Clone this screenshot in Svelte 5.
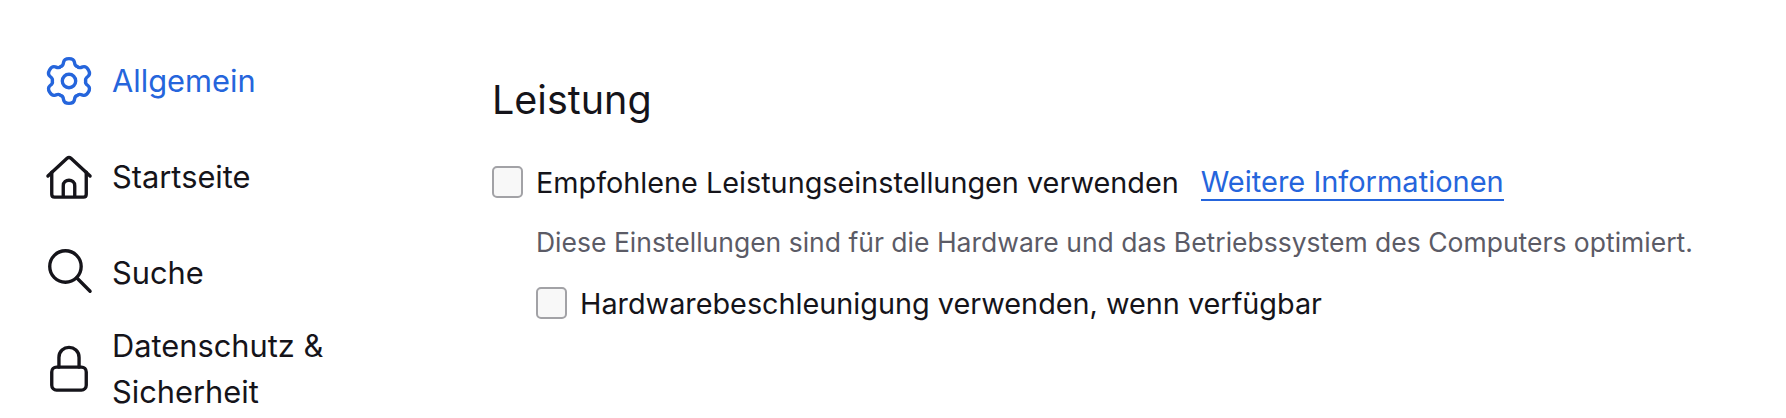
<script>
  const navItems = [
    { id: 'general', label: 'Allgemein', active: true },
    { id: 'home', label: 'Startseite' },
    { id: 'search', label: 'Suche' },
    { id: 'privacy', label: 'Datenschutz & Sicherheit' }
  ];

  function polar(deg, r) {
    const a = (deg * Math.PI) / 180;
    return `${(24 + r * Math.cos(a)).toFixed(2)} ${(24 + r * Math.sin(a)).toFixed(2)}`;
  }

  // six rounded teeth, one pointing straight up
  function gearPath() {
    let d = `M${polar(-120, 17.5)}`;
    for (let i = 0; i < 6; i++) {
      const a = -90 + i * 60;
      d += `Q${polar(a - 22, 16.5)} ${polar(a - 16, 20.5)}`;
      d += `C${polar(a - 11, 25)} ${polar(a + 11, 25)} ${polar(a + 16, 20.5)}`;
      d += `Q${polar(a + 22, 16.5)} ${polar(a + 30, 17.5)}`;
    }
    return d + 'Z';
  }
</script>

<div class="page">
  <nav class="sidebar">
    {#each navItems as item}
      <div class="nav-item" class:active={item.active}>
        <svg class="icon" viewBox="0 0 48 48" fill="none" stroke="currentColor" stroke-width="3.5" stroke-linecap="round" stroke-linejoin="round">
          {#if item.id === 'general'}
            <path d={gearPath()} />
            <circle cx="24" cy="24" r="7" />
          {:else if item.id === 'home'}
            <path d="M2 23 22 4.500c1.200-1.100 2.800-1.100 4 0L46 23" />
            <path d="M6 19v23c0 2 1 3 3 3h30c2 0 3-1 3-3V19" />
            <path d="M18 44V33c0-7.500 12-7.500 12 0v11" />
          {:else if item.id === 'search'}
            <circle cx="20.300" cy="17.200" r="16.400" />
            <path d="M32 29l14 14" />
          {:else}
            <rect x="6" y="22" width="36" height="24" rx="5" />
            <path d="M13.500 22v-10c0-14 21-14 21 0v10" />
          {/if}
        </svg>
        <span class="label">{item.label}</span>
      </div>
    {/each}
  </nav>

  <main class="content">
    <h1>Leistung</h1>
    <div class="option">
      <span class="checkbox"></span>
      <span>Empfohlene Leistungseinstellungen verwenden</span>
      <a href="#more">Weitere Informationen</a>
    </div>
    <p class="hint">Diese Einstellungen sind für die Hardware und das Betriebssystem des Computers optimiert.</p>
    <div class="option nested">
      <span class="checkbox"></span>
      <span>Hardwarebeschleunigung verwenden, wenn verfügbar</span>
    </div>
  </main>
</div>

<style>
  :global(body) {
    background: #fff;
    overflow: hidden;
  }

  .page {
    height: 418px;
    display: flex;
    font-family: Inter, "Liberation Sans", sans-serif;
    font-size: 28.800px;
    color: #15141a;
  }

  .sidebar {
    width: 492px;
    flex-shrink: 0;
    padding: 33px 0 0 46px;
    box-sizing: border-box;
  }

  .nav-item {
    display: flex;
    align-items: center;
    gap: 20px;
    min-height: 96px;
    width: 300px;
    font-size: 30.800px;
    line-height: 46px;
  }

  .nav-item.active {
    color: #2565dc;
  }

  .icon {
    width: 46px;
    height: 46px;
    flex-shrink: 0;
    overflow: visible;
  }

  .content {
    padding-top: 74px;
  }

  h1 {
    margin: 0 0 36px;
    font-size: 39.500px;
    font-weight: 400;
    line-height: 52px;
  }

  .option {
    display: flex;
    align-items: center;
    gap: 13px;
    height: 40px;
    white-space: nowrap;
  }

  .option a {
    margin-left: 9px;
    font-size: 29px;
    color: #2565dc;
    text-decoration: none;
    border-bottom: 2px solid #2565dc;
  }

  .nested {
    margin-left: 44px;
  }

  .checkbox {
    width: 27px;
    height: 28px;
    border: 2px solid #a2a2a6;
    border-radius: 5px;
    background: #f8f8f8;
    flex-shrink: 0;
  }

  .hint {
    margin: 24px 0 25px 44px;
    font-size: 26.500px;
    line-height: 32px;
    color: #5b5b66;
    white-space: nowrap;
  }
</style>
